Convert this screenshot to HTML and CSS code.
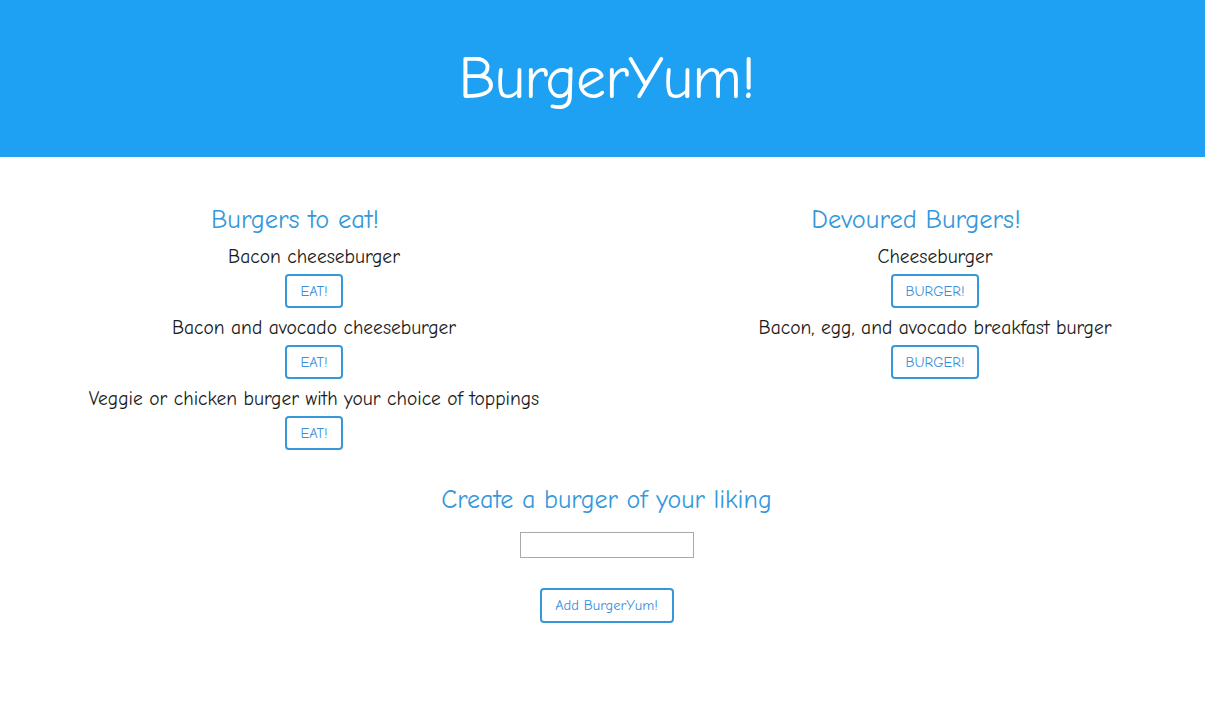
FILE: index.html
```html
<!DOCTYPE html>
<html lang="en">
<head>
<meta charset="utf-8">
<title>BurgerYum!</title>
<link rel="stylesheet" href="styles.css">
</head>
<body>
<header class="banner">
  <h1 class="banner-title">BurgerYum!</h1>
</header>
<main class="content">
  <div class="columns">
    <section class="column">
      <h2 class="column-title">Burgers to eat!</h2>
      <div class="item">
        <p class="item-name">Bacon cheeseburger</p>
        <button class="btn">EAT!</button>
      </div>
      <div class="item">
        <p class="item-name">Bacon and avocado cheeseburger</p>
        <button class="btn">EAT!</button>
      </div>
      <div class="item">
        <p class="item-name">Veggie or chicken burger with your choice of toppings</p>
        <button class="btn">EAT!</button>
      </div>
    </section>
    <section class="column">
      <h2 class="column-title">Devoured Burgers!</h2>
      <div class="item">
        <p class="item-name">Cheeseburger</p>
        <button class="btn">BURGER!</button>
      </div>
      <div class="item">
        <p class="item-name">Bacon, egg, and avocado breakfast burger</p>
        <button class="btn">BURGER!</button>
      </div>
    </section>
  </div>
  <form class="create" onsubmit="return false;">
    <h2 class="create-title">Create a burger of your liking</h2>
    <input class="create-input" type="text">
    <button class="btn btn-add" type="submit">Add BurgerYum!</button>
  </form>
</main>
</body>
</html>
```

FILE: styles.css
```css
* { box-sizing: border-box; }

html, body {
  margin: 0;
  padding: 0;
  background: #ffffff;
}

body {
  font-family: "Comic Sans MS", "Comic Neue", "Open Sans", "DejaVu Sans", sans-serif;
  color: #1a1a1a;
}

.banner {
  background: #1ea1f3;
  height: 157px;
  display: flex;
  align-items: center;
  justify-content: center;
  padding-left: 8px;
}

.banner-title {
  margin: 0;
  color: #ffffff;
  font-size: 60px;
  font-weight: 400;
  line-height: 1;
  letter-spacing: -1px;
}

.content {
  padding-top: 48px;
}

.columns {
  display: grid;
  grid-template-columns: 500px 500px;
  column-gap: 121px;
  padding-left: 64px;
}

.column {
  display: flex;
  flex-direction: column;
  align-items: center;
  text-align: center;
}

.column-title {
  margin: 0 38px 9px 0;
  color: #3498db;
  font-size: 26.5px;
  font-weight: 400;
  line-height: 30px;
}

.item {
  display: flex;
  flex-direction: column;
  align-items: center;
}

.item-name {
  margin: 0;
  font-size: 19.5px;
  line-height: 26px;
  white-space: nowrap;
}

.btn {
  margin: 4px 0 7px;
  height: 34px;
  padding: 0 13px;
  background: #ffffff;
  border: 2px solid #3498db;
  border-radius: 4px;
  color: #3a8fd8;
  font-family: inherit;
  font-size: 14.5px;
  cursor: pointer;
}

.create {
  display: flex;
  flex-direction: column;
  align-items: center;
  padding-top: 28px;
  padding-left: 8px;
}

.create-title {
  margin: 0 0 17px;
  color: #3498db;
  font-size: 26px;
  font-weight: 400;
  line-height: 30px;
}

.create-input {
  width: 174px;
  height: 26px;
  border: 1px solid #a9a9a9;
  margin: 0;
}

.btn-add {
  margin-top: 30px;
  width: 134px;
  height: 35px;
  padding: 0;
}
```
